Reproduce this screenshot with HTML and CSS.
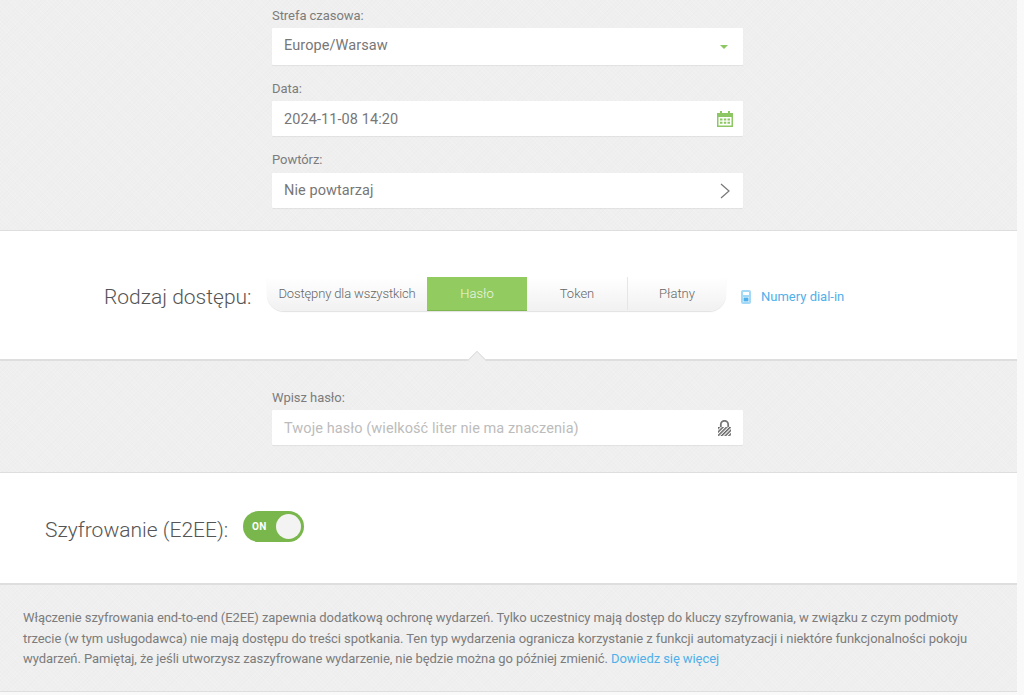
FILE: index.html
```html
<!DOCTYPE html>
<html lang="pl">
<head>
<meta charset="utf-8">
<title>Wydarzenie</title>
<link rel="stylesheet" href="styles.css">
</head>
<body>
<main class="page">
  <section class="band grey top">
    <div class="form">
      <label class="label l1">Strefa czasowa:</label>
      <div class="input h37"><span class="shift">Europe/Warsaw</span>
        <svg class="caret" width="8" height="4" viewBox="0 0 8 4"><path d="M0 0h8L4 4z" fill="#8cc763"/></svg>
      </div>
      <label class="label l2">Data:</label>
      <div class="input"><span class="nudge">2024-11-08 14:20</span>
        <svg class="cal" width="16" height="16" viewBox="0 0 16 16"><path fill="#8cc763" fill-rule="evenodd" d="M3 0h2v2h6V0h2v2h3v14H0V2h3zM1.500 6v8.500h13V6zM3 7.500h2.500v2H3zM6.800 7.500h2.500v2H6.800zM10.500 7.500H13v2h-2.500zM3 10.700h2.500v2H3zM6.800 10.700h2.500v2H6.800zM10.500 10.700H13v2h-2.500z"/></svg>
      </div>
      <label class="label l2 l3">Powtórz:</label>
      <div class="input"><span>Nie powtarzaj</span>
        <svg class="chev" width="10" height="16" viewBox="0 0 10 16"><path d="M1 1l8 7-8 7" fill="none" stroke="#777" stroke-width="1.200"/></svg>
      </div>
    </div>
  </section>

  <section class="band white access">
    <h2 class="title access-title">Rodzaj dostępu:</h2>
    <div class="segments">
      <div class="seg seg-first">Dostępny dla wszystkich</div>
      <div class="seg seg-active">Hasło</div>
      <div class="seg seg-mid">Token</div>
      <div class="seg seg-last">Płatny</div>
    </div>
    <a class="dial" href="#">
      <svg width="10" height="14" viewBox="0 0 10 14"><path fill="#a3d8f6" fill-rule="evenodd" d="M2 0h6a2 2 0 0 1 2 2v10a2 2 0 0 1-2 2H2a2 2 0 0 1-2-2V2a2 2 0 0 1 2-2zM2 2v3h6V2zM2 7v5h6V7z"/><path fill="#4fb0ea" d="M2.500 7.500h5v4h-5z"/></svg>
      Numery dial-in
    </a>
    <span class="notch"></span>
  </section>

  <section class="band grey pass">
    <div class="form">
      <label class="label">Wpisz hasło:</label>
      <div class="input"><span class="ph nudge">Twoje hasło (wielkość liter nie ma znaczenia)</span>
        <svg class="lock" width="13" height="16" viewBox="0 0 13 16">
          <defs><pattern id="h" width="2.600" height="2.600" patternUnits="userSpaceOnUse" patternTransform="rotate(-45)"><rect width="2.600" height="1.500" fill="#666"/></pattern></defs>
          <path d="M2.800 7V4.500a3.700 3.700 0 0 1 7.400 0V7" fill="none" stroke="#777" stroke-width="1.800"/>
          <rect y="7" width="13" height="9" fill="url(#h)"/>
        </svg>
      </div>
    </div>
  </section>

  <section class="band white e2ee">
    <h2 class="title e2ee-title">Szyfrowanie (E2EE):</h2>
    <div class="toggle"><span class="on">ON</span><span class="knob"></span></div>
  </section>

  <section class="band grey note">
    <p>Włączenie szyfrowania end-to-end (E2EE) zapewnia dodatkową ochronę wydarzeń. Tylko uczestnicy mają dostęp do kluczy szyfrowania, w związku z czym podmioty trzecie (w tym usługodawca) nie mają dostępu do treści spotkania. Ten typ wydarzenia ogranicza korzystanie z funkcji automatyzacji i niektóre funkcjonalności pokoju wydarzeń. Pamiętaj, że jeśli utworzysz zaszyfrowane wydarzenie, nie będzie można go później zmienić. <a href="#">Dowiedz się więcej</a></p>
  </section>
</main>
</body>
</html>
```

FILE: styles.css
```css
* { box-sizing: border-box; }
html, body { margin: 0; height: 695px; overflow: hidden; background: #f9f9f9; }
body { font-family: Roboto, "Liberation Sans", sans-serif; color: #666; font-weight: 400; }
.page { width: 1017px; display: flex; flex-direction: column; }
.band { border-bottom: 1px solid #dedede; }
.grey { background-color: #efefef; background-image: repeating-linear-gradient(45deg, rgba(255,255,255,.12) 0 1px, transparent 1px 3px), repeating-linear-gradient(-45deg, rgba(0,0,0,.006) 0 1px, transparent 1px 3px); }
.white { background: #fff; }
.form { width: 471px; margin-left: 272px; display: flex; flex-direction: column; }
.label { font-size: 13px; line-height: 15px; color: #7c7c7c; margin-bottom: 5px; letter-spacing: -.05px; }
.l2 { margin-top: 16px; }
.l3 { margin-bottom: 6px; }
.top { height: 231px; padding-top: 8px; }
.input { height: 35px; background: #fff; box-shadow: 0 1px 1px rgba(0,0,0,.06); border-radius: 1px; display: flex; align-items: center; justify-content: space-between; padding: 0 10px 0 12px; font-size: 14.500px; color: #777; letter-spacing: .08px; }
.h37 { height: 37px; }
.shift { margin-bottom: 2px; }
.nudge { margin-top: 2px; }
.caret { margin-right: 5px; }
.chev { margin-right: 3px; }
.ph { color: #bcbcbc; }
.lock { margin-right: 2px; }
.access { height: 130px; display: flex; align-items: center; position: relative; padding-left: 104px; border-bottom: 2px solid #dedede; }
.title { margin: 0; font-weight: 300; color: #555; font-size: 21px; }
.access-title { width: 163px; margin-top: 4px; }
.segments { display: flex; height: 34px; width: 459px; background: linear-gradient(#fff, #f1f1f1); border-radius: 0 0 17px 17px / 0 0 17px 17px; box-shadow: 0 1px 1px rgba(0,0,0,.12); margin-top: -2px; font-size: 13px; color: #666; font-weight: 300; }
.seg { display: flex; align-items: center; justify-content: center; height: 33px; }
.seg-first { width: 160px; border-radius: 17px 0 0 17px; letter-spacing: -.13px; }
.seg-active { width: 100px; background: #92cb5f; color: #eef7e4; box-shadow: 0 1px 0 #7fb650; }
.seg-mid { width: 101px; border-right: 1px solid #e6e6e6; }
.seg-last { width: 98px; }
.dial { display: flex; align-items: center; gap: 10px; margin-left: 15px; color: #4fb0ea; text-decoration: none; font-size: 13px; margin-top: 3px; }
.notch { position: absolute; left: 466px; bottom: -2px; width: 20px; height: 11px; overflow: hidden; }
.notch::before { content: ""; position: absolute; left: 3px; top: 4px; width: 14px; height: 14px; background: #efefef; border: 1px solid #dedede; transform: rotate(45deg); }
.pass { height: 112px; padding-top: 29px; }
.e2ee { height: 112px; display: flex; align-items: center; padding-left: 45px; padding-bottom: 3px; border-bottom: 2px solid #dedede; }
.e2ee-title { width: 198px; margin-top: 7px; }
.toggle { width: 61px; height: 31px; border-radius: 16px; background: #79b74d; display: flex; align-items: center; justify-content: space-between; padding: 0 3px 0 9px; }
.on { color: #fff; font-size: 10px; font-weight: 700; letter-spacing: .3px; }
.knob { width: 25px; height: 25px; border-radius: 50%; background: #f3f3f3; }
.note { height: 107px; padding: 23px 30px 0 23px; }
.note p { margin: 0; font-size: 13px; line-height: 20.500px; color: #7c7c7c; letter-spacing: -.08px; }
.note a { color: #4fb0ea; text-decoration: none; }
```
